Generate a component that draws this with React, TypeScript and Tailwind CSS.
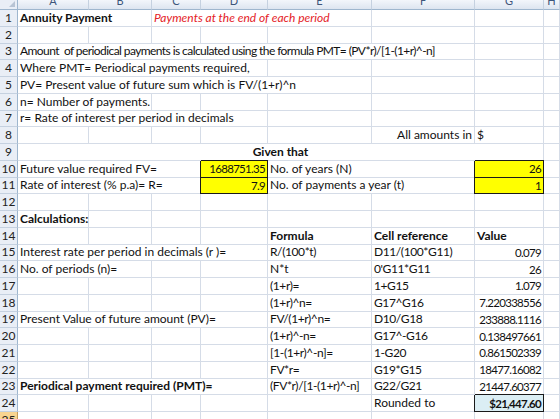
import React from "react";

type Cell = {
  span?: number;
  text?: string;
  align?: "l" | "r" | "c";
  cls?: string;
  hl?: "yellow" | "blue";
};

const COLS = "grid grid-cols-[18px_71px_63px_49px_67px_104px_103px_69px_1fr]";
const LETTERS = ["A", "B", "C", "D", "E", "F", "G", "H"];

const e = (n = 1): Cell[] => Array.from({ length: n }, () => ({}));

const SPAN: Record<number, string> = {
  1: "col-span-1",
  2: "col-span-2",
  3: "col-span-3",
  4: "col-span-4",
  5: "col-span-5",
  6: "col-span-6",
  7: "col-span-7",
};

// Calibri digits and symbols are narrower than Lato's, so squeeze those a bit
const NUM = "text-[11.5px] tracking-[-0.7px]";
const SYM = "tracking-[-0.4px]";

const ROWS: Cell[][] = [
  [{ span: 2, text: "Annuity Payment", cls: "font-bold" }, { span: 3, text: "Payments at the end of each period", cls: "italic text-[#e42127]" }, ...e(3)],
  e(8),
  [{ span: 6, text: "Amount  of periodical payments is calculated using the formula PMT= (PV*r)/[1-(1+r)^-n]", cls: "tracking-[-0.58px]" }, ...e(2)],
  [{ span: 4, text: "Where PMT= Periodical payments required," }, ...e(4)],
  [{ span: 5, text: "PV= Present value of future sum which is FV/(1+r)^n" }, ...e(3)],
  [{ span: 2, text: "n= Number of payments." }, ...e(6)],
  [{ span: 4, text: "r= Rate of interest per period in decimals" }, ...e(4)],
  [...e(5), { text: "All amounts in", align: "r" }, { text: "$" }, ...e(1)],
  [{ span: 7, text: "Given that", align: "c", cls: "font-bold" }, ...e(1)],
  [
    { span: 3, text: "Future value required FV=" },
    { text: "1688751.35", align: "r", hl: "yellow", cls: NUM },
    { span: 2, text: "No. of years (N)" },
    { text: "26", align: "r", hl: "yellow", cls: NUM },
    ...e(1),
  ],
  [
    { span: 3, text: "Rate of interest (% p.a)= R=" },
    { text: "7.9", align: "r", hl: "yellow", cls: NUM },
    { span: 2, text: "No. of payments a year (t)" },
    { text: "1", align: "r", hl: "yellow", cls: NUM },
    ...e(1),
  ],
  e(8),
  [{ text: "Calculations:", cls: "font-bold" }, ...e(7)],
  [...e(4), { text: "Formula", cls: "font-bold" }, { text: "Cell reference", cls: "font-bold" }, { text: "Value", cls: "font-bold" }, ...e(1)],
  [{ span: 4, text: "Interest rate per period in decimals (r )=" }, { text: "R/(100*t)", cls: SYM }, { text: "D11/(100*G11)", cls: SYM }, { text: "0.079", align: "r", cls: NUM }, ...e(1)],
  [{ span: 2, text: "No. of periods (n)=" }, ...e(2), { text: "N*t" }, { text: "0'G11*G11", cls: SYM }, { text: "26", align: "r", cls: NUM }, ...e(1)],
  [...e(4), { text: "(1+r)=", cls: SYM }, { text: "1+G15", cls: SYM }, { text: "1.079", align: "r", cls: NUM }, ...e(1)],
  [...e(4), { text: "(1+r)^n=", cls: SYM }, { text: "G17^G16", cls: SYM }, { text: "7.220338556", align: "r", cls: NUM }, ...e(1)],
  [{ span: 4, text: "Present Value of future amount (PV)=" }, { text: "FV/(1+r)^n=", cls: SYM }, { text: "D10/G18", cls: SYM }, { text: "233888.1116", align: "r", cls: NUM }, ...e(1)],
  [...e(4), { text: "(1+r)^-n=", cls: SYM }, { text: "G17^-G16", cls: SYM }, { text: "0.138497661", align: "r", cls: NUM }, ...e(1)],
  [...e(4), { text: "[1-(1+r)^-n]=", cls: SYM }, { text: "1-G20", cls: SYM }, { text: "0.861502339", align: "r", cls: NUM }, ...e(1)],
  [...e(4), { text: "FV*r=", cls: SYM }, { text: "G19*G15", cls: SYM }, { text: "18477.16082", align: "r", cls: NUM }, ...e(1)],
  [{ span: 4, text: "Periodical payment required (PMT)=", cls: "font-bold" }, { text: "(FV*r)/[1-(1+r)^-n]", cls: SYM }, { text: "G22/G21", cls: SYM }, { text: "21447.60377", align: "r", cls: NUM }, ...e(1)],
  [...e(5), { text: "Rounded to" }, { text: "$21,447.60", align: "r", hl: "blue", cls: `font-bold ${NUM}` }, ...e(1)],
  e(8),
];

function CellBox({ c }: { c: Cell }) {
  const span = SPAN[c.span ?? 1];
  const align = c.align === "r" ? "justify-end" : c.align === "c" ? "justify-center" : "justify-start";
  const hl =
    c.hl === "yellow"
      ? "bg-[#ffff00] border-r-[#1a1a1a] border-b-[#1a1a1a] shadow-[0_-1px_0_#1a1a1a,-1px_0_0_#1a1a1a]"
      : c.hl === "blue"
      ? "bg-[#dbeef4] border-r-[#1a1a1a] border-b-[#1a1a1a] shadow-[0_-1px_0_#1a1a1a,-1px_0_0_#1a1a1a]"
      : "border-r-[#d5dce7] border-b-[#d5dce7]";
  return (
    <div className={`${span} ${align} ${hl} flex items-end border-r border-b px-[2px] pb-[2px] min-w-0`}>
      {c.text && <span className={`whitespace-pre leading-none ${c.cls ?? ""}`}>{c.text}</span>}
    </div>
  );
}

export default function App() {
  return (
    <div className="w-[560px] h-[419px] overflow-hidden bg-white text-[12px] text-[#111] font-['Lato','Open_Sans',sans-serif]">
      {/* column headers */}
      <div className={`${COLS} h-[10px]`}>
        <div className="relative border-r border-b border-[#9eb6ce] bg-[#e9eef6]">
          <div className="absolute right-[2px] bottom-[2px] w-0 h-0 border-l-[6px] border-l-transparent border-b-[6px] border-b-[#b8c4d4]" />
        </div>
        {LETTERS.map((l) => (
          <div
            key={l}
            className="flex items-end justify-center overflow-hidden border-r border-r-[#c5d1e0] border-b border-b-[#9eb6ce] bg-gradient-to-b from-[#f3f6fb] to-[#dde5f0] text-[11px] leading-none text-[#3c557a] pb-[3px]"
          >
            {l}
          </div>
        ))}
      </div>
      {ROWS.map((row, i) => (
        <div key={i} className={`${COLS} h-[16.75px]`}>
          <div
            className={`flex items-end justify-center border-r border-b pb-[2px] text-[12px] leading-none ${
              i === 24
                ? "bg-[#f8d490] border-r-[#c29a5b] border-b-[#c29a5b] text-[#222]"
                : "bg-[#e9eef6] border-r-[#9eb6ce] border-b-[#c5d1e0] text-[#222]"
            }`}
          >
            {i + 1}
          </div>
          {row.map((c, j) => (
            <CellBox key={j} c={c} />
          ))}
        </div>
      ))}
    </div>
  );
}
